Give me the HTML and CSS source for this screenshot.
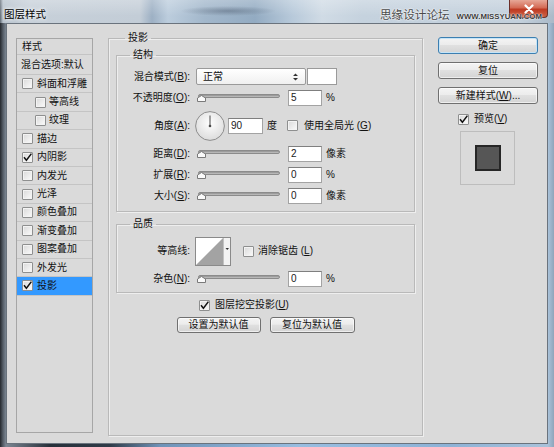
FILE: index.html
```html
<!DOCTYPE html>
<html lang="zh-CN">
<head>
<meta charset="utf-8">
<title>图层样式</title>
<link rel="stylesheet" href="styles.css">
</head>
<body>
<div class="window">
  <header class="titlebar">
    <span class="title">图层样式</span>
    <div class="watermark"><span class="wm-cn">思缘设计论坛</span><span class="wm-en">WWW.MISSYUAN.COM</span></div>
    <div class="close-btn"><svg width="12" height="10" viewBox="0 0 12 10"><path d="M2.5 1.5 L9.5 8.5 M9.5 1.5 L2.5 8.5" stroke="#fff" stroke-width="2.2" stroke-linecap="round"/></svg></div>
  </header>
  <div class="frame-body">
    <div class="client">
      <nav class="styles-list">
        <div class="list-head">样式</div>
        <div class="list-blend">混合选项:默认</div>
        <div class="list-item"><span class="cb"></span>斜面和浮雕</div>
        <div class="list-item sub"><span class="cb"></span>等高线</div>
        <div class="list-item sub"><span class="cb"></span>纹理</div>
        <div class="list-item"><span class="cb"></span>描边</div>
        <div class="list-item"><span class="cb"><svg class="tick" width="9" height="9" viewBox="0 0 9 9"><path d="M1 4.2 L3.4 7.2 L8.4 0.6" fill="none" stroke="#111" stroke-width="1.5"/></svg></span>内阴影</div>
        <div class="list-item"><span class="cb"></span>内发光</div>
        <div class="list-item"><span class="cb"></span>光泽</div>
        <div class="list-item"><span class="cb"></span>颜色叠加</div>
        <div class="list-item"><span class="cb"></span>渐变叠加</div>
        <div class="list-item"><span class="cb"></span>图案叠加</div>
        <div class="list-item"><span class="cb"></span>外发光</div>
        <div class="list-item selected"><span class="cb"><svg class="tick" width="9" height="9" viewBox="0 0 9 9"><path d="M1 4.2 L3.4 7.2 L8.4 0.6" fill="none" stroke="#111" stroke-width="1.5"/></svg></span>投影</div>
      </nav>

      <fieldset class="group main-group">
        <legend class="legend">投影</legend>
        <div class="main-body">
          <fieldset class="group sub-group">
            <legend class="legend sub-legend">结构</legend>
            <div class="struct-body">
              <div class="row">
                <span class="lbl">混合模式(<u>B</u>):</span>
                <div class="select"><span>正常</span><svg width="5" height="8" viewBox="0 0 5 8"><path d="M0 3 L2.5 0.5 L5 3 Z M0 5 L2.5 7.5 L5 5 Z" fill="#333"/></svg></div>
                <div class="swatch"></div>
              </div>
              <div class="row">
                <span class="lbl">不透明度(<u>O</u>):</span>
                <div class="slider"><div class="track"></div><svg class="thumb" width="9" height="7" viewBox="0 0 9 7"><polygon points="0.5,6.5 0.5,3 4.5,0.5 8.5,3 8.5,6.5" fill="#fafafa" stroke="#7a7a7a"/></svg></div>
                <input class="num" type="text" value="5">
                <span class="unit">%</span>
              </div>
              <div class="row row-angle">
                <span class="lbl">角度(<u>A</u>):</span>
                <svg class="dial" width="30" height="30" viewBox="0 0 30 30"><defs><radialGradient id="dg" cx="50%" cy="40%" r="60%"><stop offset="0" stop-color="#ffffff"/><stop offset="1" stop-color="#dcdcdc"/></radialGradient></defs><circle cx="15" cy="15" r="14.4" fill="url(#dg)" stroke="#8d8d8d"/><line x1="15" y1="15" x2="15" y2="4.5" stroke="#4a4a4a" stroke-width="1"/><circle cx="15" cy="15" r="1.3" fill="#4a4a4a"/></svg>
                <input class="num num-angle" type="text" value="90">
                <span class="unit deg">度</span>
                <span class="cb cb-global"></span><span class="cb-text">使用全局光 (<u>G</u>)</span>
              </div>
              <div class="row">
                <span class="lbl">距离(<u>D</u>):</span>
                <div class="slider"><div class="track"></div><svg class="thumb" width="9" height="7" viewBox="0 0 9 7"><polygon points="0.5,6.5 0.5,3 4.5,0.5 8.5,3 8.5,6.5" fill="#fafafa" stroke="#7a7a7a"/></svg></div>
                <input class="num" type="text" value="2">
                <span class="unit">像素</span>
              </div>
              <div class="row">
                <span class="lbl">扩展(<u>R</u>):</span>
                <div class="slider"><div class="track"></div><svg class="thumb" width="9" height="7" viewBox="0 0 9 7"><polygon points="0.5,6.5 0.5,3 4.5,0.5 8.5,3 8.5,6.5" fill="#fafafa" stroke="#7a7a7a"/></svg></div>
                <input class="num" type="text" value="0">
                <span class="unit">%</span>
              </div>
              <div class="row">
                <span class="lbl">大小(<u>S</u>):</span>
                <div class="slider"><div class="track"></div><svg class="thumb" width="9" height="7" viewBox="0 0 9 7"><polygon points="0.5,6.5 0.5,3 4.5,0.5 8.5,3 8.5,6.5" fill="#fafafa" stroke="#7a7a7a"/></svg></div>
                <input class="num" type="text" value="0">
                <span class="unit">像素</span>
              </div>
            </div>
          </fieldset>

          <fieldset class="group sub-group quality">
            <legend class="legend sub-legend">品质</legend>
            <div class="quality-body">
              <div class="row row-contour">
                <span class="lbl">等高线:</span>
                <svg class="contour" width="36" height="29" viewBox="0 0 36 29"><rect x="0.5" y="0.5" width="35" height="28" fill="#ffffff" stroke="#8a8a8a"/><polygon points="1,28 28,1 28,28" fill="#a3a3a3"/><rect x="28" y="1" width="7" height="27" fill="#f3f3f3"/><line x1="28.5" y1="1" x2="28.5" y2="28" stroke="#c2c2c2"/><polygon points="30.5,11 34,11 32.25,13" fill="#333"/></svg>
                <span class="cb cb-aa"></span><span class="cb-text">消除锯齿 (<u>L</u>)</span>
              </div>
              <div class="row">
                <span class="lbl">杂色(<u>N</u>):</span>
                <div class="slider"><div class="track"></div><svg class="thumb" width="9" height="7" viewBox="0 0 9 7"><polygon points="0.5,6.5 0.5,3 4.5,0.5 8.5,3 8.5,6.5" fill="#fafafa" stroke="#7a7a7a"/></svg></div>
                <input class="num" type="text" value="0">
                <span class="unit">%</span>
              </div>
            </div>
          </fieldset>

          <div class="knockout"><span class="cb"><svg class="tick" width="9" height="9" viewBox="0 0 9 9"><path d="M1 4.2 L3.4 7.2 L8.4 0.6" fill="none" stroke="#111" stroke-width="1.5"/></svg></span><span class="cb-text">图层挖空投影(<u>U</u>)</span></div>
          <div class="default-btns">
            <button class="btn btn-wide">设置为默认值</button>
            <button class="btn btn-wide">复位为默认值</button>
          </div>
        </div>
      </fieldset>

      <aside class="actions">
        <button class="btn btn-default">确定</button>
        <button class="btn">复位</button>
        <button class="btn">新建样式(<u>W</u>)...</button>
        <div class="preview-check"><span class="cb"><svg class="tick" width="9" height="9" viewBox="0 0 9 9"><path d="M1 4.2 L3.4 7.2 L8.4 0.6" fill="none" stroke="#111" stroke-width="1.5"/></svg></span><span class="cb-text">预览(<u>V</u>)</span></div>
        <div class="preview-box"><div class="preview-swatch"></div></div>
      </aside>
    </div>
  </div>
</div>
</body>
</html>
```

FILE: styles.css
```css
* { box-sizing: border-box; }
html, body { margin: 0; padding: 0; }
body {
  width: 554px;
  height: 447px;
  overflow: hidden;
  font-family: "Liberation Sans", "Noto Sans CJK SC", sans-serif;
  font-size: 10px;
  line-height: 14px;
  color: #111;
  background: #2a2f35;
}
u { text-decoration: underline; text-underline-offset: 1px; }

.window {
  width: 554px;
  height: 447px;
  display: flex;
  flex-direction: column;
  background: linear-gradient(to right, #24282d 0, #555d67 3px, #7b8692 6px, #27303a 50px, #2f3b48 110px, #6f93b8 160px, #98bde0 300px, #8db2d6 450px, #a9c2da 548px, #8fa5ba 554px);
}

/* title bar */
.titlebar {
  position: relative;
  height: 23px;
  flex: none;
  display: flex;
  align-items: flex-start;
  justify-content: space-between;
  background:
    radial-gradient(ellipse 48px 5px at 228px 11px, rgba(70, 85, 105, 0.45), rgba(70, 85, 105, 0)),
    linear-gradient(to bottom, rgba(255, 255, 255, 0.25), rgba(255, 255, 255, 0) 70%),
    linear-gradient(to right, #5d6670 0, #b6c1cc 3px, #c7d0d9 30px, #c3cdd7 140px, #9db0c4 152px, #bccddd 168px, #a2b7cb 205px, #93abc2 255px, #b7c9da 292px, #d0dbe5 322px, #c5d2de 362px, #c3d0dc 520px, #aab9c8 554px);
}
.title {
  margin: 7px 0 0 4px;
  font-size: 10.5px;
  line-height: 14px;
  color: #000;
  text-shadow: 0 0 3px #fff, 0 0 5px #fff;
}
.close-btn {
  width: 39px;
  height: 18px;
  margin-right: 6px;
  display: flex;
  align-items: center;
  justify-content: center;
  border: 1px solid #6b2f28;
  border-top: none;
  border-radius: 0 0 4px 4px;
  background: linear-gradient(#e7a797 0%, #d46b55 45%, #bf3a22 55%, #cc6246 100%);
}
.watermark {
  position: absolute;
  left: 380px;
  top: 7px;
  display: flex;
  align-items: baseline;
  pointer-events: none;
}
.wm-cn {
  font-size: 11.6px;
  line-height: 15px;
  color: #4a4a4a;
  text-shadow: 0 0 2px #fff, 0 0 2px #fff;
}
.wm-en {
  margin-left: 7px;
  font-size: 7.8px;
  font-weight: bold;
  color: #3c3c3c;
  text-shadow: 0 0 2px #fff, 0 0 1px #fff;
}

/* body frame */
.frame-body {
  flex: 1;
  display: flex;
  padding: 0 6px 3px 6px;
}
.client {
  flex: 1;
  display: flex;
  align-items: flex-start;
  padding: 7px 0 0 9px;
  border: 1px solid #6a737d;
  background: #dadada;
}

/* left list */
.styles-list {
  width: 77px;
  height: 395px;
  margin-top: 7px;
  flex: none;
  border: 1px solid #a6a6a6;
}
.list-head {
  height: 16px;
  line-height: 15px;
  padding-left: 5px;
  border-bottom: 1px solid #c4c4c4;
}
.list-blend {
  height: 20px;
  line-height: 19px;
  padding-left: 4px;
  border-bottom: 1px solid #c4c4c4;
  white-space: nowrap;
}
.list-item {
  height: 18.4px;
  display: flex;
  align-items: center;
  padding-left: 5px;
  border-bottom: 1px solid #c4c4c4;
  white-space: nowrap;
}
.list-item .cb { margin-right: 4px; }
.list-item.sub { padding-left: 18px; }
.list-item.sub .cb { margin-right: 3px; }
.list-item.selected { background: #3399ff; }

/* checkbox */
.cb {
  width: 11px;
  height: 11px;
  flex: none;
  display: inline-flex;
  align-items: center;
  justify-content: center;
  border: 1px solid #8e8f8f;
  border-radius: 1px;
  background: linear-gradient(135deg, #d9d9d9, #fbfbfb);
  box-shadow: inset 0 0 0 1px #f3f3f3;
}
.tick { display: block; overflow: visible; }

/* groups */
.group {
  margin: 0;
  padding: 0;
  min-width: 0;
  border: 1px solid #b9b9b9;
  box-shadow: 1px 1px 0 #eeeeee, inset 1px 1px 0 #eeeeee;
}
.legend {
  margin-left: 16px;
  padding: 0 3px;
  font-size: 10px;
  line-height: 14px;
}
.sub-legend { margin-left: 13px; }
.main-group {
  width: 315px;
  margin-left: 15px;
  flex: none;
}
.main-body { height: 387px; }
.sub-group { margin: 3px 7px 0 7px; }
.sub-group.quality { margin-top: 5px; }
.struct-body { padding: 4px 0 5px 0; }
.quality-body { padding: 5px 0 3px 0; }

.row {
  height: 21px;
  display: flex;
  align-items: center;
  white-space: nowrap;
}
.row-angle { height: 35px; }
.row-contour { height: 30px; margin-bottom: 2px; }
.lbl {
  width: 73px;
  flex: none;
  margin-right: 6px;
  text-align: right;
}

.select {
  width: 110px;
  height: 17px;
  display: flex;
  align-items: center;
  justify-content: space-between;
  padding: 0 7px 0 6px;
  border: 1px solid #9a9a9a;
  border-radius: 2px;
  background: linear-gradient(#ffffff, #f0f0f0);
}
.swatch {
  width: 30px;
  height: 17px;
  margin-left: 1px;
  border: 1px solid #9a9a9a;
  background: #fff;
}

.slider {
  position: relative;
  width: 88px;
  height: 12px;
  flex: none;
}
.track {
  width: 82px;
  height: 4px;
  margin: 2px 0 0 2px;
  border: 1px solid #8b8b8b;
  border-radius: 2px;
  background: linear-gradient(#8f8f8f, #c4c4c4);
}
.thumb {
  position: absolute;
  left: 1px;
  top: 3px;
  display: block;
}

.num {
  width: 34px;
  height: 16px;
  margin: 0 0 0 4px;
  padding: 0 0 0 2px;
  font: inherit;
  font-size: 10px;
  color: #1a1a1a;
  border: 1px solid #a3a3a3;
  border-top-color: #7f7f7f;
  background: #fff;
  outline: none;
}
.unit { margin-left: 4px; }

.dial { display: block; flex: none; margin-left: -1px; }
.num-angle { width: 35px; margin-left: 3px; }
.deg { margin-left: 4px; }
.cb-global { margin-left: 10px; }
.cb-text { margin-left: 5px; }
.row-angle .cb-text { margin-left: 6px; }

.contour { display: block; flex: none; margin-left: -1px; }
.cb-aa { margin-left: 12px; }
.row-contour .cb-text { margin-left: 4px; }

.knockout {
  height: 14px;
  margin: 5px 0 0 90px;
  display: flex;
  align-items: center;
}
.default-btns {
  margin-top: 5px;
  display: flex;
  justify-content: center;
  gap: 9px;
}

/* buttons */
.btn {
  height: 17px;
  padding: 0;
  font: inherit;
  font-size: 10px;
  line-height: 15px;
  color: #111;
  border: 1px solid #707070;
  border-radius: 3px;
  background: linear-gradient(#f4f4f4 0%, #ececec 45%, #e0e0e0 50%, #d4d4d4 100%);
  box-shadow: inset 0 0 0 1px rgba(255, 255, 255, 0.6);
}
.btn-wide { width: 84px; height: 16px; line-height: 14px; }
.btn-wide + .btn-wide { width: 85px; }
.btn-default {
  border-color: #3c7fb1;
  box-shadow: inset 0 0 0 1px #c5e4f7;
}

.actions {
  width: 100px;
  margin: 6px 0 0 15px;
  flex: none;
  display: flex;
  flex-direction: column;
  gap: 8px;
}
.preview-check {
  height: 14px;
  margin: 0 0 0 20px;
  display: flex;
  align-items: center;
}
.preview-box {
  width: 55px;
  height: 54px;
  margin: -3px 0 0 22px;
  display: flex;
  align-items: center;
  justify-content: center;
  border: 1px solid #bdbdbd;
}
.preview-swatch {
  width: 26px;
  height: 26px;
  border: 2px solid #262626;
  background: #565656;
}
```
